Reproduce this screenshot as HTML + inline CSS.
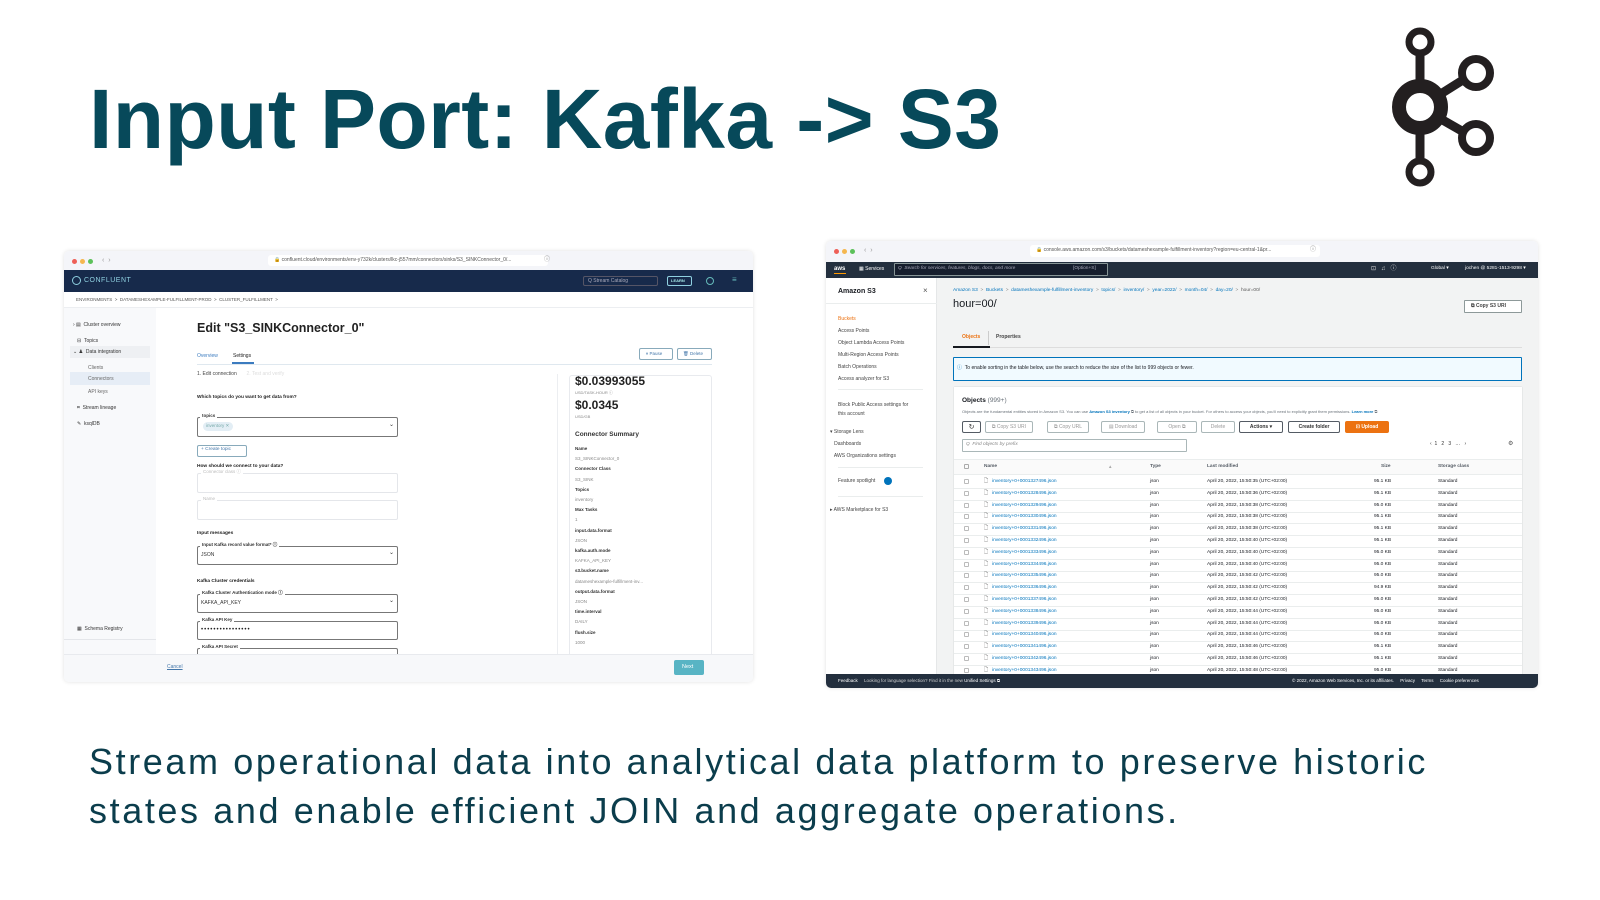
<!DOCTYPE html>
<html><head><meta charset="utf-8">
<style>
*{margin:0;padding:0;box-sizing:border-box}
body{width:1600px;height:900px;background:#fff;position:relative;overflow:hidden;font-family:"Liberation Sans",sans-serif}
.a{position:absolute;white-space:nowrap}
.t{position:absolute;white-space:nowrap;line-height:1}
#title{left:89px;top:77px;font-size:84px;font-weight:bold;color:#07495a;letter-spacing:0.4px;line-height:84px}
.sub{left:89px;font-size:36px;color:#0b3d4c;line-height:36px;letter-spacing:2.6px}
.win{position:absolute;background:#fff;border-radius:5px;box-shadow:0 0 4px rgba(0,0,0,.12);overflow:hidden}
.dot{position:absolute;width:5px;height:5px;border-radius:50%}
.c5{font-size:5px;color:#333}
.c6{font-size:6px;color:#222}
.box{position:absolute;border:1px solid #777;border-radius:2px;background:#fff}
.fbox{position:absolute;border:1px solid #e4e6ea;border-radius:2px}
.btn{position:absolute;border:1px solid #aab7b8;border-radius:2px;background:#fff;font-size:5px;color:#999;text-align:center;line-height:11px}
</style></head><body>

<div id="title" class="a">Input Port: Kafka -&gt; S3</div>

<svg class="a" style="left:1380px;top:20px" width="120" height="175" viewBox="1380 20 120 175">
<g stroke="#231f20" fill="none">
<line x1="1420" y1="50" x2="1420" y2="165" stroke-width="9"/>
<line x1="1420" y1="107" x2="1474" y2="73" stroke-width="9"/>
<line x1="1420" y1="107" x2="1474" y2="138" stroke-width="9"/>
<circle cx="1420" cy="42" r="11" stroke-width="7" fill="#fff"/>
<circle cx="1420" cy="172" r="11" stroke-width="7" fill="#fff"/>
<circle cx="1420" cy="107" r="21" stroke-width="14" fill="#fff"/>
<circle cx="1476" cy="73" r="14" stroke-width="8" fill="#fff"/>
<circle cx="1476" cy="138" r="14" stroke-width="8" fill="#fff"/>
</g></svg>

<div class="a sub" style="top:744px">Stream operational data into analytical data platform to preserve historic</div>
<div class="a sub" style="top:793px">states and enable efficient JOIN and aggregate operations.</div>

<div class="win" style="left:64px;top:251px;width:689px;height:431px">
 <div class="a" style="left:0;top:0;width:689px;height:19px;background:#f4f5f9"></div>
 <div class="dot" style="left:8px;top:8px;background:#ee5f57"></div>
 <div class="dot" style="left:16px;top:8px;background:#f5b74f"></div>
 <div class="dot" style="left:24px;top:8px;background:#5cc15a"></div>
 <div class="t" style="left:38px;top:6px;font-size:7px;color:#999">&lsaquo; &nbsp;&rsaquo;</div>
 <div class="a" style="left:204px;top:4px;width:280px;height:11px;background:#fff;border-radius:3px"></div>
 <div class="t c5" style="left:210px;top:7px;color:#555">🔒 confluent.cloud/environments/env-y732k/clusters/lkc-j557mm/connectors/sinks/S3_SINKConnector_0/...</div>
 <div class="t" style="left:480px;top:6px;font-size:6px;color:#777">ⓘ</div>
 <div class="a" style="left:0;top:19px;width:689px;height:22px;background:#172a4b"></div>
 <div class="a" style="left:8px;top:25px;width:9px;height:9px;border:1px solid #8fd0e0;border-radius:50%"></div>
 <div class="t" style="left:20px;top:26px;font-size:7px;color:#8fd0e0;letter-spacing:.5px">CONFLUENT</div>
 <div class="a" style="left:519px;top:25px;width:75px;height:10px;border:1px solid #556;border-radius:2px"></div>
 <div class="t" style="left:524px;top:28px;font-size:5px;color:#aab">Q Stream Catalog</div>
 <div class="a" style="left:603px;top:25px;width:25px;height:10px;border:1px solid #8fd0e0;border-radius:2px"></div>
 <div class="t" style="left:607px;top:28px;font-size:4px;color:#aee;font-weight:bold">LEARN</div>
 <div class="a" style="left:642px;top:26px;width:8px;height:8px;border:1px solid #6bb;border-radius:50%"></div>
 <div class="t" style="left:668px;top:25px;font-size:8px;color:#6bb">≡</div>
 <div class="t" style="left:12px;top:47px;font-size:4.5px;color:#555">ENVIRONMENTS &nbsp;&gt;&nbsp; DATAMESHEXAMPLE-FULFILLMENT-PROD &nbsp;&gt;&nbsp; CLUSTER_FULFILLMENT &nbsp;&gt;</div>
 <div class="a" style="left:0;top:56px;width:689px;height:1px;background:#eceef1"></div>
 <div class="a" style="left:0;top:57px;width:92px;height:346px;background:#f8f9fb"></div>
 <div class="a" style="left:6px;top:95px;width:80px;height:12px;background:#eef0f3"></div>
 <div class="a" style="left:6px;top:121px;width:80px;height:13px;background:#e6edf6"></div>
 <div class="t c5" style="left:9px;top:72px">› ▤ &nbsp;Cluster overview</div>
 <div class="t c5" style="left:13px;top:88px">⊟ &nbsp;Topics</div>
 <div class="t c5" style="left:9px;top:99px">⌄ ♟ &nbsp;Data integration</div>
 <div class="t c5" style="left:24px;top:115px;color:#666">Clients</div>
 <div class="t c5" style="left:24px;top:126px;color:#666">Connectors</div>
 <div class="t c5" style="left:24px;top:139px;color:#666">API keys</div>
 <div class="t c5" style="left:13px;top:155px">⌗ &nbsp;Stream lineage</div>
 <div class="t c5" style="left:13px;top:171px">✎ &nbsp;ksqlDB</div>
 <div class="t c5" style="left:13px;top:376px">▦ &nbsp;Schema Registry</div>
 <div class="a" style="left:0;top:388px;width:92px;height:1px;background:#e4e6ea"></div>
 <div class="t" style="left:133px;top:71px;font-size:12.5px;font-weight:bold;color:#222">Edit "S3_SINKConnector_0"</div>
 <div class="t c5" style="left:133px;top:103px;color:#3b7bbf">Overview</div>
 <div class="t c5" style="left:169px;top:103px;color:#222">Settings</div>
 <div class="a" style="left:133px;top:113px;width:515px;height:1px;background:#dfe8ef"></div>
 <div class="a" style="left:168px;top:111px;width:22px;height:2px;background:#3b7bbf"></div>
 <div class="a" style="left:575px;top:97px;width:34px;height:12px;border:1px solid #8ab;border-radius:2px"></div>
 <div class="t" style="left:582px;top:101px;font-size:4.5px;color:#47a">⏸ Pause</div>
 <div class="a" style="left:613px;top:97px;width:35px;height:12px;border:1px solid #8ab;border-radius:2px"></div>
 <div class="t" style="left:619px;top:101px;font-size:4.5px;color:#47a">🗑 Delete</div>
 <div class="t c5" style="left:133px;top:121px;color:#444">1. Edit connection &nbsp;&nbsp;&nbsp;&nbsp;&nbsp;&nbsp;<span style="color:#ddd">2. Test and verify</span></div>
 <div class="a" style="left:493px;top:123px;width:1px;height:280px;background:#eceef1"></div>
 <div class="a" style="left:505px;top:124px;width:143px;height:285px;border:1px solid #e8eaee;border-radius:3px"></div>
 <div class="t" style="left:511px;top:124px;font-size:12px;font-weight:bold;color:#222">$0.03993055</div>
 <div class="t" style="left:511px;top:140px;font-size:4px;color:#888">USD/TASK-HOUR ⓘ</div>
 <div class="t" style="left:511px;top:148px;font-size:12px;font-weight:bold;color:#222">$0.0345</div>
 <div class="t" style="left:511px;top:164px;font-size:4px;color:#888">USD/GB</div>
 <div class="t" style="left:511px;top:181px;font-size:6.5px;font-weight:bold;color:#333">Connector Summary</div>
 <div class="t" style="left:511px;top:193px;font-size:4.5px;line-height:10.2px;color:#333;white-space:pre"><b>Name</b>
<span style="color:#888">S3_SINKConnector_0</span>
<b>Connector Class</b>
<span style="color:#888">S3_SINK</span>
<b>Topics</b>
<span style="color:#888">inventory</span>
<b>Max Tasks</b>
<span style="color:#888">1</span>
<b>input.data.format</b>
<span style="color:#888">JSON</span>
<b>kafka.auth.mode</b>
<span style="color:#888">KAFKA_API_KEY</span>
<b>s3.bucket.name</b>
<span style="color:#888">datameshexample-fulfillment-inv...</span>
<b>output.data.format</b>
<span style="color:#888">JSON</span>
<b>time.interval</b>
<span style="color:#888">DAILY</span>
<b>flush.size</b>
<span style="color:#888">1000</span></div>
 <div class="t" style="left:133px;top:145px;font-size:4.8px;font-weight:bold;color:#222">Which topics do you want to get data from?</div>
 <div class="box" style="left:133px;top:166px;width:201px;height:20px"></div>
 <div class="t" style="left:136px;top:163px;font-size:4.5px;background:#fff;padding:0 2px;color:#333;font-weight:bold">topics</div>
 <div class="a" style="left:139px;top:171px;width:30px;height:9px;background:#e3eef5;border-radius:5px"></div>
 <div class="t" style="left:142px;top:173px;font-size:4.5px;color:#7aa">inventory ✕</div>
 <div class="t" style="left:325px;top:171px;font-size:6px;color:#333">⌄</div>
 <div class="a" style="left:133px;top:194px;width:50px;height:12px;border:1px solid #8ab;border-radius:2px"></div>
 <div class="t" style="left:137px;top:197px;font-size:4.8px;color:#47a">+ Create topic</div>
 <div class="t" style="left:133px;top:214px;font-size:4.8px;font-weight:bold;color:#222">How should we connect to your data?</div>
 <div class="fbox" style="left:133px;top:222px;width:201px;height:20px"></div>
 <div class="t" style="left:137px;top:219px;font-size:4.5px;background:#fff;padding:0 2px;color:#bbb">Connector class ⓘ</div>
 <div class="fbox" style="left:133px;top:249px;width:201px;height:20px"></div>
 <div class="t" style="left:137px;top:246px;font-size:4.5px;background:#fff;padding:0 2px;color:#bbb">Name</div>
 <div class="t" style="left:133px;top:281px;font-size:4.8px;font-weight:bold;color:#222">Input messages</div>
 <div class="box" style="left:133px;top:295px;width:201px;height:19px"></div>
 <div class="t" style="left:136px;top:292px;font-size:4.5px;background:#fff;padding:0 2px;color:#333;font-weight:bold">Input Kafka record value format* ⓘ</div>
 <div class="t" style="left:137px;top:302px;font-size:5px;color:#333">JSON</div>
 <div class="t" style="left:325px;top:299px;font-size:6px;color:#333">⌄</div>
 <div class="t" style="left:133px;top:329px;font-size:4.8px;font-weight:bold;color:#222">Kafka Cluster credentials</div>
 <div class="box" style="left:133px;top:343px;width:201px;height:19px"></div>
 <div class="t" style="left:136px;top:340px;font-size:4.5px;background:#fff;padding:0 2px;color:#333;font-weight:bold">Kafka Cluster Authentication mode ⓘ</div>
 <div class="t" style="left:137px;top:350px;font-size:5px;color:#333">KAFKA_API_KEY</div>
 <div class="t" style="left:325px;top:347px;font-size:6px;color:#333">⌄</div>
 <div class="box" style="left:133px;top:370px;width:201px;height:19px"></div>
 <div class="t" style="left:136px;top:367px;font-size:4.5px;background:#fff;padding:0 2px;color:#333;font-weight:bold">Kafka API Key</div>
 <div class="t" style="left:137px;top:376px;font-size:6px;color:#222;letter-spacing:1px">••••••••••••••••</div>
 <div class="box" style="left:133px;top:397px;width:201px;height:19px"></div>
 <div class="t" style="left:136px;top:394px;font-size:4.5px;background:#fff;padding:0 2px;color:#333;font-weight:bold">Kafka API Secret</div>
 <div class="a" style="left:0;top:403px;width:689px;height:28px;background:#f7f8fa;border-top:1px solid #e8eaee"></div>
 <div class="t" style="left:103px;top:414px;font-size:5px;color:#47a;text-decoration:underline">Cancel</div>
 <div class="a" style="left:610px;top:409px;width:30px;height:15px;background:#58b4c4;border-radius:2px"></div>
 <div class="t" style="left:618px;top:414px;font-size:5.5px;color:#fff">Next</div>
</div>

<div class="win" style="left:826px;top:241px;width:712px;height:447px">
 <div class="a" style="left:0;top:0;width:712px;height:21px;background:#f4f5f9"></div>
 <div class="dot" style="left:8px;top:8px;background:#ee5f57"></div>
 <div class="dot" style="left:16px;top:8px;background:#f5b74f"></div>
 <div class="dot" style="left:24px;top:8px;background:#5cc15a"></div>
 <div class="t" style="left:38px;top:6px;font-size:7px;color:#999">&lsaquo; &nbsp;&rsaquo;</div>
 <div class="a" style="left:204px;top:4px;width:290px;height:12px;background:#fff;border-radius:3px"></div>
 <div class="t c5" style="left:210px;top:7px;color:#555">🔒 console.aws.amazon.com/s3/buckets/datameshexample-fulfillment-inventory?region=eu-central-1&amp;pr...</div>
 <div class="t" style="left:484px;top:6px;font-size:6px;color:#777">ⓘ</div>
 <div class="a" style="left:0;top:21px;width:712px;height:16px;background:#232f3e"></div>
 <div class="t" style="left:8px;top:25px;font-size:6px;color:#fff;font-weight:bold">aws</div>
 <div class="a" style="left:8px;top:32px;width:12px;height:1px;background:#f90"></div>
 <div class="t" style="left:33px;top:26px;font-size:5px;color:#fff">▦ Services</div>
 <div class="a" style="left:68px;top:22px;width:214px;height:13px;background:#161e2d;border:1px solid #879596;border-radius:1px"></div>
 <div class="t" style="left:72px;top:26px;font-size:4.8px;color:#aab;font-style:italic">Q &nbsp;Search for services, features, blogs, docs, and more</div>
 <div class="t" style="left:247px;top:26px;font-size:4.8px;color:#aab">[Option+S]</div>
 <div class="t" style="left:545px;top:25px;font-size:6px;color:#ddd">⊡ &nbsp;&nbsp;♫ &nbsp;&nbsp;ⓘ</div>
 <div class="t" style="left:605px;top:26px;font-size:4.8px;color:#fff">Global ▾</div>
 <div class="t" style="left:639px;top:26px;font-size:4.8px;color:#fff">jochen @ 5281-1513-9298 ▾</div>
 <div class="a" style="left:0;top:37px;width:111px;height:396px;background:#fff;border-right:1px solid #e5e7e8"></div>
 <div class="t" style="left:12px;top:47px;font-size:7px;font-weight:bold;color:#16191f">Amazon S3</div>
 <div class="t" style="left:97px;top:46px;font-size:8px;color:#555">×</div>
 <div class="a" style="left:0;top:62px;width:111px;height:1px;background:#eaeded"></div>
 <div class="t" style="left:12px;top:72px;font-size:5px;line-height:12px;color:#444;white-space:pre"><span style="color:#ec7211">Buckets</span>
Access Points
Object Lambda Access Points
Multi-Region Access Points
Batch Operations
Access analyzer for S3</div>
 <div class="a" style="left:12px;top:148px;width:85px;height:1px;background:#eaeded"></div>
 <div class="t" style="left:12px;top:160px;font-size:5px;line-height:9px;color:#444;white-space:pre">Block Public Access settings for
this account</div>
 <div class="t" style="left:4px;top:185px;font-size:5px;line-height:12px;color:#444;white-space:pre">▾ Storage Lens
   Dashboards
   AWS Organizations settings</div>
 <div class="a" style="left:12px;top:226px;width:85px;height:1px;background:#eaeded"></div>
 <div class="t" style="left:12px;top:238px;font-size:5px;color:#444">Feature spotlight</div>
 <div class="a" style="left:58px;top:236px;width:8px;height:8px;background:#0073bb;border-radius:50%"></div>
 <div class="a" style="left:12px;top:255px;width:85px;height:1px;background:#eaeded"></div>
 <div class="t" style="left:4px;top:267px;font-size:5px;color:#444">▸ AWS Marketplace for S3</div>

 <div class="a" style="left:111px;top:37px;width:601px;height:396px;background:#f2f3f3"></div>
 <div class="t" style="left:127px;top:48px;font-size:4.8px;color:#0073bb">Amazon S3 &nbsp;<span style="color:#888">&gt;</span>&nbsp; Buckets &nbsp;<span style="color:#888">&gt;</span>&nbsp; datameshexample-fulfillment-inventory &nbsp;<span style="color:#888">&gt;</span>&nbsp; topics/ &nbsp;<span style="color:#888">&gt;</span>&nbsp; inventory/ &nbsp;<span style="color:#888">&gt;</span>&nbsp; year=2022/ &nbsp;<span style="color:#888">&gt;</span>&nbsp; month=04/ &nbsp;<span style="color:#888">&gt;</span>&nbsp; day=20/ &nbsp;<span style="color:#888">&gt;</span>&nbsp; <span style="color:#555">hour=00/</span></div>
 <div class="t" style="left:127px;top:58px;font-size:11px;color:#16191f">hour=00/</div>
 <div class="a" style="left:638px;top:59px;width:58px;height:13px;border:1px solid #8d9999;background:#fff;border-radius:1px"></div>
 <div class="t" style="left:645px;top:63px;font-size:5px;color:#444;font-weight:bold">⧉ Copy S3 URI</div>
 <div class="t" style="left:136px;top:94px;font-size:5px;color:#ec7211;font-weight:bold">Objects</div>
 <div class="t" style="left:170px;top:94px;font-size:5px;color:#444;font-weight:bold">Properties</div>
 <div class="a" style="left:162px;top:90px;width:1px;height:14px;background:#ccc"></div>
 <div class="a" style="left:127px;top:106px;width:569px;height:1px;background:#ddd"></div>
 <div class="a" style="left:127px;top:105px;width:37px;height:2px;background:#16191f"></div>
 <div class="a" style="left:127px;top:116px;width:569px;height:24px;background:#f1faff;border:1px solid #0073bb;border-radius:1px"></div>
 <div class="t" style="left:131px;top:125px;font-size:5px;color:#16191f"><span style="color:#0073bb">ⓘ</span> &nbsp;To enable sorting in the table below, use the search to reduce the size of the list to 999 objects or fewer.</div>
 <div class="a" style="left:128px;top:146px;width:568px;height:290px;background:#fff;box-shadow:0 0 1px #bbb"></div>
 <div class="t" style="left:136px;top:157px;font-size:6.5px;font-weight:bold;color:#16191f">Objects <span style="font-weight:normal;color:#687078">(999+)</span></div>
 <div class="t" style="left:136px;top:169px;font-size:4px;color:#687078">Objects are the fundamental entities stored in Amazon S3. You can use <b style="color:#0073bb">Amazon S3 inventory</b> ⧉ to get a list of all objects in your bucket. For others to access your objects, you'll need to explicitly grant them permissions. <b style="color:#0073bb">Learn more</b> ⧉</div>
 <div class="btn" style="left:136px;top:180px;width:19px;height:12px;border-color:#545b64;color:#333;font-size:7px">↻</div>
 <div class="btn" style="left:159px;top:180px;width:48px;height:12px">⧉ Copy S3 URI</div>
 <div class="btn" style="left:221px;top:180px;width:42px;height:12px">⧉ Copy URL</div>
 <div class="btn" style="left:275px;top:180px;width:44px;height:12px">▤ Download</div>
 <div class="btn" style="left:331px;top:180px;width:40px;height:12px">Open ⧉</div>
 <div class="btn" style="left:375px;top:180px;width:34px;height:12px">Delete</div>
 <div class="btn" style="left:413px;top:180px;width:44px;height:12px;border-color:#545b64;color:#333;font-weight:bold">Actions ▾</div>
 <div class="btn" style="left:462px;top:180px;width:52px;height:12px;border-color:#545b64;color:#333;font-weight:bold">Create folder</div>
 <div class="btn" style="left:519px;top:180px;width:44px;height:12px;border-color:#ec7211;background:#ec7211;color:#fff;font-weight:bold">⊡ Upload</div>
 <div class="a" style="left:136px;top:198px;width:225px;height:13px;border:1px solid #aab7b8;border-radius:1px"></div>
 <div class="t" style="left:140px;top:202px;font-size:4.8px;color:#888;font-style:italic">Q &nbsp;Find objects by prefix</div>
 <div class="t" style="left:604px;top:201px;font-size:5px;color:#333">‹ &nbsp;1 &nbsp;&nbsp;2 &nbsp;&nbsp;3 &nbsp;&nbsp;… &nbsp;&nbsp;›</div>
 <div class="t" style="left:682px;top:200px;font-size:6px;color:#555">⚙</div>
 <div class="a" style="left:128px;top:218px;width:568px;height:16px;background:#fafafa;border-bottom:1px solid #eaeded;border-top:1px solid #eaeded"></div>
 <div class="a" style="left:138px;top:223px;width:5px;height:5px;border:1px solid #aaa;border-radius:1px"></div>
 <div class="t" style="left:158px;top:224px;font-size:4.8px;color:#545b64;font-weight:bold">Name</div>
 <div class="t" style="left:282px;top:224px;font-size:4.5px;color:#aaa">▲</div>
 <div class="t" style="left:324px;top:224px;font-size:4.8px;color:#545b64;font-weight:bold">Type</div>
 <div class="t" style="left:381px;top:224px;font-size:4.8px;color:#545b64;font-weight:bold">Last modified</div>
 <div class="t" style="left:555px;top:224px;font-size:4.8px;color:#545b64;font-weight:bold">Size</div>
 <div class="t" style="left:612px;top:224px;font-size:4.8px;color:#545b64;font-weight:bold">Storage class</div>
 <div id="rows"></div>
 <div class="a" style="left:0;top:433px;width:712px;height:14px;background:#232f3e"></div>
 <div class="t" style="left:12px;top:438px;font-size:4.5px;color:#fff">Feedback &nbsp;&nbsp;&nbsp;&nbsp;<span style="color:#ccc">Looking for language selection? Find it in the new</span> Unified Settings ⧉</div>
 <div class="t" style="left:466px;top:438px;font-size:4.5px;color:#fff">© 2022, Amazon Web Services, Inc. or its affiliates. &nbsp;&nbsp;&nbsp;&nbsp;Privacy &nbsp;&nbsp;&nbsp;&nbsp;Terms &nbsp;&nbsp;&nbsp;&nbsp;Cookie preferences</div>
</div>

<script>
(function(){
 var sizes=["95.1","95.1","95.0","95.1","95.1","95.1","95.0","95.0","95.0","94.9","95.0","95.0","95.0","95.0","95.1","95.1","95.0"];
 var secs=["35","36","38","38","38","40","40","40","42","42","42","44","44","44","46","46","48"];
 var h="";
 for(var i=0;i<17;i++){
  var y=236+i*11.8;
  var n=1327496+i*1000;
  h+='<div class="a" style="left:138px;top:'+(y+2)+'px;width:5px;height:5px;border:1px solid #bbb;border-radius:1px"></div>';
  h+='<div class="t" style="left:158px;top:'+(y+2)+'px;font-size:5px;color:#333">🗋</div>';
  h+='<div class="t" style="left:166px;top:'+(y+3)+'px;font-size:4.8px;color:#0073bb">inventory+0+000'+n+'.json</div>';
  h+='<div class="t" style="left:324px;top:'+(y+3)+'px;font-size:4.8px;color:#16191f">json</div>';
  h+='<div class="t" style="left:381px;top:'+(y+3)+'px;font-size:4.8px;color:#16191f">April 20, 2022, 15:50:'+secs[i]+' (UTC+02:00)</div>';
  h+='<div class="t" style="left:548px;top:'+(y+3)+'px;font-size:4.8px;color:#16191f">'+sizes[i]+' KB</div>';
  h+='<div class="t" style="left:612px;top:'+(y+3)+'px;font-size:4.8px;color:#16191f">Standard</div>';
  h+='<div class="a" style="left:128px;top:'+(y+11)+'px;width:568px;height:1px;background:#eaeded"></div>';
 }
 document.getElementById('rows').outerHTML=h;
})();
</script>
</body></html>
